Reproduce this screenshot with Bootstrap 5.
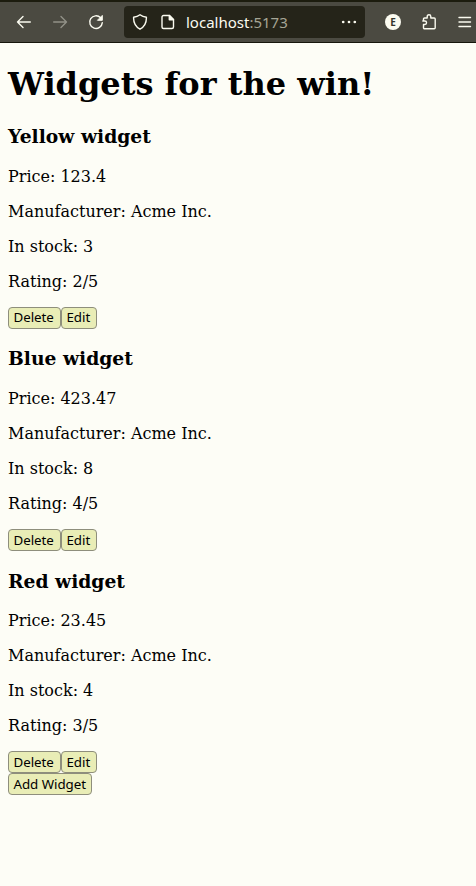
<!DOCTYPE html>
<html lang="en">
<head>
<meta charset="utf-8">
<meta name="viewport" content="width=device-width, initial-scale=1">
<title>Widgets</title>
<link href="https://cdn.jsdelivr.net/npm/bootstrap@5.3.0/dist/css/bootstrap.min.css" rel="stylesheet">
<style>
body{background:#fdfdf6;color:#000;font-family:"DejaVu Serif",serif;font-size:16px;line-height:19px;min-height:886px;overflow:hidden}
.toolbar{height:43px;background:#4b4a41;border-top:2px solid #1c1c0e;border-bottom:1px solid #16160c;color:#fbfbf0;font-family:"Noto Sans",sans-serif;padding-left:16px}
.toolbar svg{display:block;flex:none;fill:none;stroke:currentColor;stroke-width:1.4;stroke-linecap:round;stroke-linejoin:round}
.gap-left{margin-left:20px}
.page-icon{margin-left:12px}
.address{width:241px;height:32px;background:#252419;padding-left:8px;padding-right:8px;border-radius:4px}
.host{font-size:15px;line-height:20px;margin-left:10px;white-space:nowrap}
.port{color:#a5a595}
.faded{opacity:.4}
.avatar{width:16px;height:16px;background:#fbfbf0;color:#35342b;font-size:10px;line-height:16px}
main{padding:23px 8px 0}
h1{font-size:32px;font-weight:700;line-height:37px;margin:0 0 22.2px}
h3{font-size:18.72px;font-weight:700;line-height:22px;margin:0 0 19.8px}
main p{margin:0 0 16px}
.widget{height:222.16px}
.plain-btn{display:block;height:22px;padding:0 0 0 4.5px;border:1px solid #8e8e7c;border-radius:4px;background:#e9edb6;color:#000;font:13.33px/19px "Noto Sans",sans-serif;letter-spacing:-.05px;white-space:nowrap;text-align:left}
.w-delete{width:53px}.w-edit{width:36px}.w-add{width:84px}
</style>
</head>
<body>
<nav class="toolbar d-flex align-items-center" aria-label="Browser toolbar">
<svg width="16" height="16" viewBox="0 0 16 16"><path d="M14.3 8H1.5M7 2.5 1.5 8 7 13.5"/></svg>
<svg class="faded gap-left" width="16" height="16" viewBox="0 0 16 16"><path d="M1.7 8h12.8M9 2.5 14.5 8 9 13.5"/></svg>
<svg class="gap-left" width="16" height="16" viewBox="0 0 16 16"><path d="M12.6 3.8A6.3 6.3 0 1 0 14.3 8.6"/><path d="M14.3 1.8v4.5H9.8z" fill="currentColor" stroke-width="1"/></svg>
<div class="address gap-left d-flex align-items-center">
<svg width="16" height="16" viewBox="0 0 16 16"><path d="M8 .8c2 1.500 4.200 2.200 6.400 2.500.2 5.200-1.600 9.300-6.400 11.900C3.200 12.600 1.400 8.500 1.600 3.300 3.800 3 6 2.300 8 .8z"/></svg>
<svg class="page-icon" width="16" height="16" viewBox="0 0 16 16"><path d="M3.500 1.500h6l4 4v7.500a1.500 1.500 0 0 1-1.500 1.500H3.500A1.500 1.500 0 0 1 2 13V3a1.500 1.500 0 0 1 1.500-1.500z"/><path d="M9.300 1.500v4.200h4.200z" fill="currentColor"/></svg>
<span class="host">localhost<span class="port">:5173</span></span>
<svg class="ms-auto" width="16" height="16" viewBox="0 0 16 16"><g fill="currentColor" stroke="none"><circle cx="2.200" cy="8" r="1.350"/><circle cx="8" cy="8" r="1.350"/><circle cx="13.800" cy="8" r="1.350"/></g></svg>
</div>
<span class="avatar gap-left rounded-circle text-center fw-bold">E</span>
<svg class="gap-left" width="16" height="16" viewBox="0 0 16 16"><path d="M2.500 6V5a1 1 0 0 1 1-1h2.700V2.500a1.800 1.800 0 0 1 3.600 0V4h3.400a1 1 0 0 1 1 1v8.700a1 1 0 0 1-1 1H3.500a1 1 0 0 1-1-1V10.500h1.300a1.700 1.700 0 0 0 0-3.500H1.800"/></svg>
<svg class="gap-left" width="16" height="16" viewBox="0 0 16 16"><path d="M2 3.500h11.500M2 8h11.500M2 12.500h11.500"/></svg>
</nav>
<main>
<h1>Widgets for the win!</h1>
<section class="widget"><h3>Yellow widget</h3><p>Price: 123.4</p><p>Manufacturer: Acme Inc.</p><p>In stock: 3</p><p>Rating: 2/5</p>
<div class="d-flex"><button class="plain-btn w-delete">Delete</button><button class="plain-btn w-edit">Edit</button></div></section>
<section class="widget"><h3>Blue widget</h3><p>Price: 423.47</p><p>Manufacturer: Acme Inc.</p><p>In stock: 8</p><p>Rating: 4/5</p>
<div class="d-flex"><button class="plain-btn w-delete">Delete</button><button class="plain-btn w-edit">Edit</button></div></section>
<section><h3>Red widget</h3><p>Price: 23.45</p><p>Manufacturer: Acme Inc.</p><p>In stock: 4</p><p>Rating: 3/5</p>
<div class="d-flex"><button class="plain-btn w-delete">Delete</button><button class="plain-btn w-edit">Edit</button></div>
<button class="plain-btn w-add">Add Widget</button></section>
</main>
<script src="https://cdn.jsdelivr.net/npm/bootstrap@5.3.0/dist/js/bootstrap.bundle.min.js"></script>
</body>
</html>
